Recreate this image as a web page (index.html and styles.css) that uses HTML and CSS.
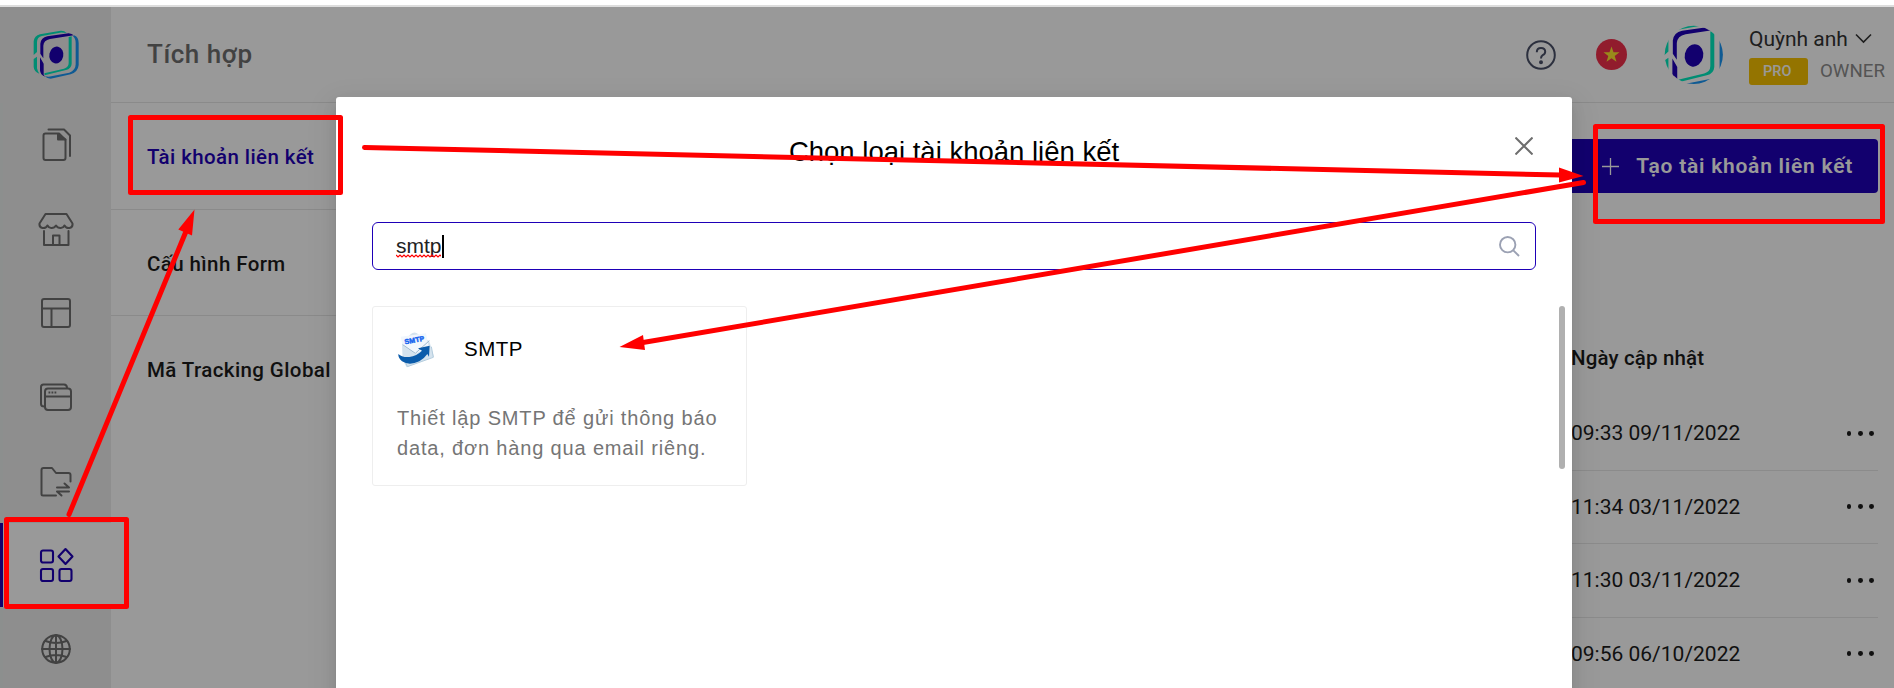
FILE: index.html
```html
<!DOCTYPE html>
<html lang="vi">
<head>
<meta charset="utf-8">
<title>Tích hợp</title>
<link rel="stylesheet" href="styles.css">
</head>
<body>
<svg class="defs" width="0" height="0">
  <defs>
    <g id="logo">
      <path d="M101 166V125Q103 109 120 104L182 93Q192 92 200 100L184 98.500L126 109Q111 112 111 128V157ZM101 178L111 171V206Q113 215 118 222Q102 216 101 202Z" fill="#00ebc0"/>
      <path d="M206 112L215 110V192Q214 207 198 211L134 227L133 221L192 207Q206 203 206 190Z" fill="#00ebc0"/>
      <path d="M222 107Q236 112 236 130V196Q234 217 212 224L152 237Q142 237 134 230L146 231L208 219Q227 212 227 194V130Q227 116 219 110Z" fill="#1996f5"/>
      <path d="M121 162V132Q123 114 142 110L206 101Q216 102 221 107L150 118Q131 122 130 138V176ZM120 173L131 192V225L135 231Q121 226 120 212Z" fill="#1e00b7"/>
      <ellipse cx="169" cy="166" rx="21" ry="25.500" transform="rotate(12 169 166)" fill="#1e00b7"/>
    </g>
    <clipPath id="disc"><circle cx="168.500" cy="164.500" r="66"/></clipPath>
  </defs>
</svg>

<div class="app">
  <aside class="sidebar">
    <div class="brand"><svg width="48" height="51" viewBox="96 88 144 153"><use href="#logo"/></svg></div>
    <nav class="nav">
      <a class="nav-item"><svg width="34" height="36" viewBox="0 0 34 36"><path d="M4.500 8.500Q4.500 6.500 6.500 6.500H20L26.500 13V31Q26.500 33 24.500 33H6.500Q4.500 33 4.500 31Z"/><path d="M19 7V12.500H26.500Z" fill="#6e6e6e"/><path d="M9.500 2.500H25L31 8.500V29"/></svg></a>
      <a class="nav-item"><svg width="36" height="36" viewBox="0 0 36 36"><path d="M7.500 3H28.500L34.500 12.500Q35 16.500 31.500 17Q28 17.500 26.500 14.500Q25 17.300 22.300 17Q19.500 17 18 14.500Q16.500 17 13.700 17Q11 17.300 9.500 14.500Q8 17.500 4.500 17Q1 16.500 1.500 12.500ZM6 20V34H30.500V20M15 34V24.500H21.500V34"/></svg></a>
      <a class="nav-item"><svg width="32" height="32" viewBox="0 0 32 32"><rect x="2" y="2" width="28" height="28" rx="2"/><path d="M2 11.500H30M11.500 11.500V30"/></svg></a>
      <a class="nav-item"><svg width="34" height="30" viewBox="0 0 34 30"><path d="M5.500 24.500Q2 24.500 2 22V5Q2 2.500 4.500 2.500H25Q28 2.500 28 6"/><rect x="6" y="6.500" width="26" height="21.500" rx="3"/><path d="M6 14.500H32"/><path class="tabs" d="M9.500 10.500h8" stroke-dasharray="1.800 1.200"/></svg></a>
      <a class="nav-item"><svg width="36" height="34" viewBox="0 0 36 34"><path d="M18 31.500H5Q3.500 31.500 3.500 30V6Q3.500 4 5.500 4H14L18 9H30.500Q32.500 9 32.500 11V17.500M19 23.500H31L26.500 19.500M31 27.500H19L23.500 31.500"/></svg></a>
      <a class="nav-item active"><svg width="36" height="38" viewBox="0 0 36 38"><rect x="3" y="4.500" width="12" height="12" rx="2"/><rect x="3" y="23" width="12" height="12" rx="2"/><rect x="21.500" y="23" width="12" height="12" rx="2"/><path d="M27.500 3L34.500 10.500L27.500 18L20.500 10.500Z"/></svg></a>
      <a class="nav-item"><svg width="32" height="32" viewBox="0 0 32 32"><circle cx="16" cy="16" r="13.800"/><ellipse cx="16" cy="16" rx="6.500" ry="13.800"/><path d="M16 2V30M2 16H30M5.500 8Q16 12 26.500 8M5.500 24Q16 20 26.500 24"/></svg></a>
    </nav>
  </aside>

  <div class="main">
    <header class="topbar">
      <h1 class="page-title">Tích hợp</h1>
      <div class="tools">
        <svg class="help" width="32" height="32" viewBox="0 0 32 32"><circle cx="16" cy="16" r="13.800"/><path d="M11.800 13.200Q11.800 9 16 9Q20.200 9 20.200 12.700Q20.200 15 17.700 16.200Q16 17.200 16 19.500"/><circle cx="16" cy="23.300" r="1" /></svg>
        <svg class="flag" width="31" height="31" viewBox="0 0 31 31"><circle cx="15.500" cy="15.500" r="15.500" fill="#f22f4c"/><path d="M15.500 7.500L17.500 13.300H23.500L18.700 16.900L20.500 22.700L15.500 19.200L10.500 22.700L12.300 16.900L7.500 13.300H13.500Z" fill="#ffe62e"/></svg>
        <svg class="avatar" width="60" height="60" viewBox="101 97 136 136"><g clip-path="url(#disc)"><use href="#logo"/></g></svg>
        <div class="user">
          <div class="user-name"><span>Quỳnh anh</span><svg width="17" height="11" viewBox="0 0 17 11"><path d="M1 1.500L8.500 9L16 1.500" fill="none" stroke="#333" stroke-width="1.600"/></svg></div>
          <div class="user-role"><span class="badge">PRO</span><span class="role">OWNER</span></div>
        </div>
      </div>
    </header>
    <div class="body">
      <ul class="submenu">
        <li class="current"><span>Tài khoản liên kết</span></li>
        <li><span>Cấu hình Form</span></li>
        <li class="last"><span>Mã Tracking Global</span></li>
      </ul>
      <section class="content">
        <button class="create"><svg width="17" height="17" viewBox="0 0 17 17"><path d="M8.500 0V17M0 8.500H17" stroke="#fff" stroke-width="1.300"/></svg><span>Tạo tài khoản liên kết</span></button>
        <div class="table">
          <div class="thead">Ngày cập nhật</div>
          <div class="row"><span>09:33 09/11/2022</span><i class="dots"><b></b><b></b><b></b></i></div>
          <div class="row"><span>11:34 03/11/2022</span><i class="dots"><b></b><b></b><b></b></i></div>
          <div class="row"><span>11:30 03/11/2022</span><i class="dots"><b></b><b></b><b></b></i></div>
          <div class="row"><span>09:56 06/10/2022</span><i class="dots"><b></b><b></b><b></b></i></div>
        </div>
      </section>
    </div>
  </div>
</div>

<div class="overlay">
  <div class="modal">
    <div class="modal-head">
      <h2>Chọn loại tài khoản liên kết</h2>
      <svg class="close" width="18" height="18" viewBox="0 0 18 18"><path d="M.5.500L17.500 17.500M17.500.500L.5 17.500" stroke="#6e6e6e" stroke-width="2"/></svg>
    </div>
    <div class="search">
      <span class="typed">smtp<svg class="squiggle" width="45" height="4" viewBox="0 0 45 4"><path d="M0 1l2 2 2-2 2 2 2-2 2 2 2-2 2 2 2-2 2 2 2-2 2 2 2-2 2 2 2-2 2 2 2-2 2 2 2-2 2 2 2-2 2 2 2-2 2 2" fill="none" stroke="#f00" stroke-width="1.200"/></svg></span><span class="caret"></span>
      <svg class="lens" width="21" height="21" viewBox="0 0 21 21"><circle cx="8.700" cy="8.700" r="7.700"/><path d="M14.300 14.300L20 20"/></svg>
    </div>
    <div class="results">
      <article class="card">
        <div class="card-head">
          <svg width="36" height="36" viewBox="0 0 108 108">
            <path d="M12 36L36 8Q50-4 60 6L94 28L108 74L26 106L14 84Z" fill="#d5e3ee"/>
            <path d="M8 14L84 4L92 44L52 66L14 40Z" fill="#f1f7fd"/>
            <path d="M14 38L52 64L94 26" fill="none" stroke="#9db9cf" stroke-width="3"/>
            <path d="M20 84L28 104L106 76L100 44" fill="none" stroke="#b3ccdd" stroke-width="3"/>
            <text x="21" y="37" font-family="Liberation Sans" font-size="21" font-weight="700" fill="#1764ef" stroke="#1764ef" stroke-width="1.500" textLength="60" transform="rotate(-11 21 36)">SMTP</text>
            <path d="M1 66Q0 78 12 88Q34 102 64 88Q80 78 88 66L93 74L95 41L60 49L72 56Q56 72 34 75Q12 77 1 66Z" fill="#0b5cab"/>
          </svg>
          <h3>SMTP</h3>
        </div>
        <p>Thiết lập SMTP để gửi thông báo data, đơn hàng qua email riêng.</p>
      </article>
      <div class="scrollbar"></div>
    </div>
  </div>
</div>

<svg class="notes" width="1894" height="688" viewBox="0 0 1894 688">
  <g fill="none" stroke="#f00" stroke-width="5" stroke-linejoin="round" stroke-linecap="round">
    <rect x="130.500" y="117.500" width="210" height="75"/>
    <rect x="6.500" y="519.500" width="120" height="87"/>
    <rect x="1595.500" y="126.500" width="287" height="95"/>
    <path d="M69 514.500L187 229M364.500 147.500L1560 175M1583.500 182.500L643 342.500"/>
  </g>
  <path d="M194.500 209.500L178.300 229.500L192 235.500ZM1583.500 176L1559 167.500V182.500ZM619.500 347L643 335L645 350Z" fill="#f00"/>
</svg>
</body>
</html>
```

FILE: styles.css
```css
* { box-sizing: border-box; }
body { margin: 0; width: 1894px; height: 688px; overflow: hidden; position: relative; background: #fff; font-family: Roboto, sans-serif; color: #1c1c1c; }
h1, h2, h3, p, ul { margin: 0; padding: 0; font-weight: 400; }
.defs { position: absolute; }

.app { display: flex; height: 688px; padding-top: 7px; }
.sidebar { width: 111px; background: #ededed; flex: none; }
.brand { height: 96px; padding: 22px 0 0 32px; }
.brand svg { display: block; }
.nav-item { display: flex; align-items: center; justify-content: center; height: 84px; border-left: 3px solid #eaeeed; padding-right: 2px; }
.nav-item svg { fill: none; stroke: #6e6e6e; stroke-width: 2; stroke-linejoin: round; stroke-linecap: round; }
.nav-item .tabs { stroke-linecap: butt; }
.nav-item.active { background: #fff; border-color: #1e00b7; }
.nav-item.active svg { stroke: #1e00b7; stroke-width: 2.1; }

.main { flex: 1; display: flex; flex-direction: column; }
.topbar { height: 96px; border-bottom: 1px solid #e6e6e6; display: flex; justify-content: space-between; padding-left: 36px; }
.page-title { font-size: 26px; font-weight: 500; line-height: 95px; letter-spacing: .55px; color: #6e6e6e; }
.tools { display: flex; align-items: center; }
.help { fill: none; stroke: #4a5068; stroke-width: 2; margin-right: 39px; }
.flag { margin-right: 37px; }
.avatar { margin-right: 25px; }
.user { width: 145px; padding-bottom: 2px; }
.user-name { display: flex; align-items: center; gap: 7px; font-size: 21px; line-height: 32px; color: #333; }
.user-role { display: flex; align-items: center; gap: 12px; margin-top: 3px; }
.badge { width: 59px; height: 27px; border-radius: 3px; background: #f7c200; color: #fff; font-size: 14.500px; font-weight: 500; line-height: 27px; padding-left: 14px; }
.role { font-size: 18.700px; color: #8c8c8c; }

.body { flex: 1; display: flex; }
.submenu { width: 300px; list-style: none; }
.submenu li { height: 106px; padding: 2px 0 0 36px; border-bottom: 1px solid #e6e6e6; font-size: 20.500px; letter-spacing: .4px; font-weight: 500; display: flex; align-items: center; white-space: nowrap; }
.submenu li.last { border: 0; }
.submenu .current { height: 107px; color: #1e00b7; }

.content { flex: 1; padding: 36px 16px 0 0; display: flex; flex-direction: column; align-items: flex-end; }
.create { width: 330px; height: 54px; border: 0; border-radius: 4px; background: #1e00b7; color: #fff; display: flex; align-items: center; justify-content: flex-end; gap: 17px; padding: 0 25px 0 0; font: 600 21px Roboto, sans-serif; letter-spacing: .75px; }
.table { width: 307px; padding-top: 144px; font-size: 21px; }
.thead { height: 60px; line-height: 42px; font-weight: 500; font-size: 20.500px; letter-spacing: .15px; white-space: nowrap; }
.row { height: 73.500px; border-bottom: 1px solid #e8e8e8; display: flex; align-items: center; justify-content: space-between; padding-right: 4px; }
.dots { display: flex; gap: 6.500px; }
.dots b { width: 4.800px; height: 4.800px; border-radius: 50%; background: #1c1c1c; }

.overlay { position: absolute; left: 0; right: 0; top: 5px; bottom: 0; border-top: 2px solid #ddd; background: rgba(0, 0, 0, .4); background-clip: padding-box; padding: 90px 322px 0 336px; overflow: hidden; }
.modal { height: 700px; background: #fff; border-radius: 3px; color: #000; font-family: "Liberation Sans", sans-serif; padding: 0 7px 0 36px; box-shadow: 0 3px 6px -4px rgba(0,0,0,.12), 0 6px 16px rgba(0,0,0,.08), 0 9px 28px 8px rgba(0,0,0,.05); }
.modal-head { height: 125px; display: flex; justify-content: flex-end; align-items: flex-start; }
.modal-head h2 { flex: 1; text-align: center; font-size: 27.500px; line-height: 30px; padding: 40px 0 0 21px; }
.close { margin: 40px 32px 0 0; }
.search { width: 1164px; height: 48px; border: 1px solid #1e00b7; border-radius: 6px; display: flex; align-items: center; padding: 0 15px 0 23px; font-size: 21px; color: #222; }
.typed { position: relative; }
.squiggle { position: absolute; left: 0; bottom: 0; }
.caret { width: 2px; height: 23px; background: #000; }
.lens { margin-left: auto; fill: none; stroke: #9ba1b3; stroke-width: 1.900; }
.results { display: flex; justify-content: space-between; align-items: flex-start; padding-top: 36px; }
.card { width: 375px; height: 180px; border: 1px solid #eee; border-radius: 3px; padding: 25px 0 0 25px; }
.card-head { display: flex; align-items: center; gap: 30px; height: 36px; }
.card h3 { font-size: 20.500px; letter-spacing: .5px; margin-top: -2px; }
.card p { width: 345px; margin: 35px 0 0 -1px; font-size: 20px; line-height: 30px; letter-spacing: .84px; color: #757575; }
.scrollbar { width: 6px; height: 163px; border-radius: 3px; background: #b0b0b0; }
.notes { position: absolute; left: 0; top: 0; }
```
